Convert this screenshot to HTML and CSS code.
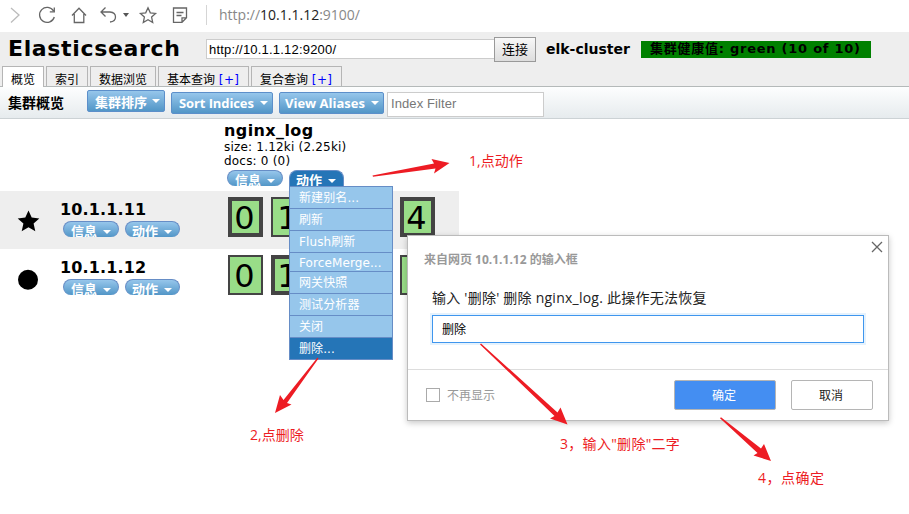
FILE: index.html
```html
<!DOCTYPE html>
<html lang="zh-CN">
<head>
<meta charset="utf-8">
<title>Elasticsearch</title>
<link rel="stylesheet" href="styles.css">
</head>
<body>
<div class="browser">
  <svg class="nav-icons" width="210" height="32" viewBox="0 0 210 32" fill="none" stroke="#666" stroke-width="1.3">
    <path d="M11 8l8 7-8 7.500" stroke="#bbb"/>
    <path d="M53.500 11a7.500 7.500 0 1 0 .8 6M54.300 7.500v4.300h-4.500"/>
    <path d="M72 15.500l7-7.300 7 7.300M74.300 14v8.500h9.500V14"/>
    <path d="M105.500 7.500L101 12l4.500 4.500M101.500 12h8.500q5.500 .5 5.500 5t-5.500 5"/>
    <path d="M123 13h6l-3 4z" fill="#555" stroke="none"/>
    <path d="M148 7.800l2.300 5 5.300.6-4 3.700 1.100 5.400-4.700-2.700-4.700 2.700 1.100-5.400-4-3.700 5.300-.6z"/>
    <path d="M182 22.300h-8.500V8h13v9.800zM182 22.300v-4.500h4.500M176.500 12.500h7M176.500 15.500h5"/>
    <path d="M206.500 5v20" stroke="#d5d5d5" stroke-width="1"/>
  </svg>
  <span class="address">http://<b>10.1.1.12</b>:9100/</span>
</div>
<header class="header">
  <div class="connect">
    <h1>Elasticsearch</h1>
    <input class="url" value="http://10.1.1.12:9200/">
    <button class="connect-btn">连接</button>
    <span class="cluster">elk-cluster</span>
    <span class="health">集群健康值: green (10 of 10)</span>
  </div>
  <nav class="tabs">
    <div class="tab tab-active t1">概览</div>
    <div class="tab t2">索引</div>
    <div class="tab t3">数据浏览</div>
    <div class="tab t4">基本查询 <span class="add">[+]</span></div>
    <div class="tab t5">复合查询 <span class="add">[+]</span></div>
  </nav>
</header>
<div class="toolbar">
  <strong class="tool-title">集群概览</strong>
  <div class="btn b1"><span>集群排序</span><i class="caret"></i></div>
  <div class="btn b2"><span>Sort Indices</span><i class="caret"></i></div>
  <div class="btn b3"><span>View Aliases</span><i class="caret"></i></div>
  <input class="filter" placeholder="Index Filter">
</div>
<main class="overview">
  <section class="index-head">
    <h2>nginx_log</h2>
    <div class="stat size">size: 1.12ki (2.25ki)</div>
    <div class="stat docs">docs: 0 (0)</div>
    <div class="pills">
      <div class="pill"><span>信息</span><i class="caret"></i></div>
      <div class="pill pill-open"><span>动作</span><i class="caret"></i></div>
      <div class="menu">
        <div>新建别名...</div>
        <div>刷新</div>
        <div>Flush刷新</div>
        <div class="short">ForceMerge...</div>
        <div>网关快照</div>
        <div>测试分析器</div>
        <div>关闭</div>
        <div class="selected">删除...</div>
      </div>
    </div>
  </section>
  <section class="node node-odd">
    <svg class="mark" width="24" height="24" viewBox="0 0 24 24"><path d="M12.500 1.500l3.200 7 7.600.9-5.700 5.200 1.700 7.700-6.800-4-6.800 4 1.700-7.700L1.700 9.400l7.600-.9z"/></svg>
    <div class="node-info"><h3>10.1.1.11</h3>
      <div class="pills"><div class="pill"><span>信息</span><i class="caret"></i></div><div class="pill p2"><span>动作</span><i class="caret"></i></div></div>
    </div>
    <div class="shards"><div class="shard primary">0</div><div class="shard">1</div><div class="shard primary">2</div><div class="shard">3</div><div class="shard primary">4</div></div>
  </section>
  <section class="node">
    <svg class="mark" width="24" height="24" viewBox="0 0 24 24"><circle cx="12" cy="12.700" r="10"/></svg>
    <div class="node-info"><h3>10.1.1.12</h3>
      <div class="pills"><div class="pill"><span>信息</span><i class="caret"></i></div><div class="pill p2"><span>动作</span><i class="caret"></i></div></div>
    </div>
    <div class="shards"><div class="shard">0</div><div class="shard primary">1</div><div class="shard">2</div><div class="shard primary">3</div><div class="shard">4</div></div>
  </section>
</main>
<div class="dialog">
  <div class="dialog-body">
    <svg class="close" width="12" height="12" viewBox="0 0 12 12" stroke="#666" stroke-width="1.300"><path d="M1 1l10 10M11 1L1 11"/></svg>
    <div class="dialog-title">来自网页 10.1.1.12 的输入框</div>
    <div class="dialog-msg">输入 '删除' 删除 nginx_log. 此操作无法恢复</div>
    <input class="dialog-input" value="删除">
  </div>
  <div class="dialog-foot">
    <span class="check"></span><span class="check-label">不再显示</span>
    <button class="ok">确定</button><button class="cancel">取消</button>
  </div>
</div>
<svg class="arrows" width="909" height="514" viewBox="0 0 909 514" fill="#ed1c24">
  <path d="M372.500 175.500L434 163.500 431.500 159 449.500 163 434 173.500 435.500 168.500 373 176.800z"/>
  <path d="M317.500 357.500L283.500 400 280 395 275 413 291.500 404.500 287 403 318.500 358.500z"/>
  <path d="M481 343.500L557.500 412.500 560.500 407.500 567.500 424.500 550 418.500 554.500 416 480 344.500z"/>
  <path d="M721 417.200L761 448.500 764 444 771 461 753.500 455.500 757.500 453 720 418.200z"/>
</svg>
<span class="note n1">1,点动作</span>
<span class="note n2">2,点删除</span>
<span class="note n3">3，输入"删除"二字</span>
<span class="note n4">4，点确定</span>
</body>
</html>
```
FILE: styles.css
```css
* { box-sizing: border-box; }
body { margin: 0; width: 909px; height: 514px; overflow: hidden; position: relative; background: #fff; color: #000; font-family: "DejaVu Sans", "Noto Sans CJK SC", sans-serif; font-size: 12px; }
h1, h2, h3 { margin: 0; }
input, button { font: inherit; margin: 0; border-radius: 0; outline: 0; }
span { white-space: nowrap; }
.browser { height: 32px; display: flex; align-items: center; }
.nav-icons { flex: none; }
.address { margin-left: 9px; font: 14px/20px "Open Sans", sans-serif; color: #888; padding-bottom: 2px; }
.address b { font-weight: 400; color: #222; }
.header { height: 55px; background: #eee; border-bottom: 1px solid #b4b9b9; display: flex; flex-direction: column; justify-content: space-between; }
.connect { height: 34px; display: flex; align-items: center; padding-left: 8px; }
h1 { font-size: 22px; line-height: 34px; width: 198px; letter-spacing: .65px; }
.url { width: 289px; height: 20px; border: 1px solid #ccc; padding: 0 2px; font: 13px "Liberation Sans", sans-serif; letter-spacing: .2px; }
.connect-btn { width: 42px; height: 25px; border: 1px solid #999; background: linear-gradient(#f8f8f8, #ddd); padding: 0; font: 13px/20px "Noto Sans CJK SC", sans-serif; margin-left: -1px; }
.cluster { font-weight: 700; font-size: 14px; margin-left: 10px; width: 95px; }
.health { background: #008000; font-weight: 700; font-size: 13px; line-height: 16px; height: 17px; width: 230px; padding-left: 9px; letter-spacing: .75px; }
.tabs { display: flex; height: 20px; padding-left: 2px; gap: 2px; }
.tab { border: 1px solid #b5b5b5; border-bottom: 0; height: 20px; padding: 3px 0 0 8px; line-height: 20px; white-space: nowrap; }
.tab-active { background: #fff; height: 21px; }
.t1 { width: 42px; } .t2 { width: 42px; } .t3 { width: 66px; } .t4 { width: 91px; } .t5 { width: 91px; }
.add { color: #00f; letter-spacing: .4px; }
.toolbar { height: 32px; border-bottom: 1px solid #ccd2d5; background: linear-gradient(#fdfefe, #e6ebee); display: flex; padding: 5px 0 0 8px; }
.tool-title { width: 79px; font-size: 14px; line-height: 22px; }
.btn { height: 22px; border: 1px solid #5c8fca; border-radius: 2px; background: linear-gradient(#96c6eb, #5296c7); color: #fff; font-weight: 700; display: flex; align-items: center; justify-content: space-between; padding: 0 4px 0 7px; white-space: nowrap; }
.b1 { width: 78px; margin-top: -2px; margin-right: 6px; font-size: 13px; }
.b2 { width: 102px; margin-right: 6px; font: 700 13px "Open Sans", sans-serif; letter-spacing: -.1px; }
.b3 { width: 105px; margin-right: 3px; font: 700 13px "Open Sans", sans-serif; padding-left: 5px; }
.caret { border: 4px solid transparent; border-top-color: #fff; border-bottom: 0; width: 8px; height: 4px; flex: none; }
.filter { width: 157px; height: 25px; border: 1px solid #ccc; padding: 0 3px 2px; font: 13px "Liberation Sans", sans-serif; letter-spacing: .1px; }
.filter::placeholder { color: #777; }
.index-head { height: 72px; margin-left: 224px; padding-top: 2px; }
h2 { font-size: 16px; line-height: 19px; height: 19px; letter-spacing: .4px; }
.stat { line-height: 14px; height: 14px; letter-spacing: .2px; }
.index-head .pills { margin: 2px 0 0 3px; gap: 6px; }
.pills { display: flex; position: relative; gap: 6px; }
.pill { width: 56px; height: 16px; border: 1px solid #668dc6; border-bottom: 0; border-radius: 8px; background: linear-gradient(#96c6eb, #5296c7); color: #fff; font-weight: 700; font-size: 13px; line-height: 20px; display: flex; justify-content: space-between; padding: 0 7px 0 7px; overflow: hidden; }
.p2 { width: 55px; padding-left: 6px; }
.pill .caret { margin-top: 8px; }
.pill-open { width: 55px; background: #2575b7; border-radius: 8px 8px 0 0; padding-left: 6px; }
.menu { position: absolute; left: 62px; top: 16px; width: 104px; border: 1px solid #668dc6; border-top-width: 1px; z-index: 2; }
.menu div { height: 22px; background: #96c6eb; color: #fff; padding: 1px 0 0 9px; line-height: 21px; border-bottom: 1px solid #668dc6; white-space: nowrap; letter-spacing: .1px; }
.menu .short { height: 19px; line-height: 18px; }
.menu .selected { height: 21px; background: #2575b7; border: 0; }
.node { width: 459px; height: 58px; display: flex; }
.node-odd { background: #eee; }
.mark { margin: 18px 0 0 16px; flex: none; }
.node-info { width: 168px; padding-left: 20px; flex: none; }
h3 { font-size: 16px; line-height: 19px; height: 30px; padding-top: 9px; letter-spacing: .15px; }
.node-info .pills { padding-left: 3px; }
.shards { display: flex; gap: 8px; padding: 6px 0 0 20px; }
.shard { width: 35px; height: 40px; border: 2px solid #444; background: #99dd88; font-size: 32px; line-height: 38px; display: flex; justify-content: center; padding-right: 2px; }
.shard.primary { border-width: 4px; line-height: 34px; }
.dialog { position: absolute; left: 407px; top: 235px; width: 482px; height: 186px; background: #fff; border: 1px solid #bbb; box-shadow: 0 2px 6px rgba(0,0,0,.22); z-index: 3; font-family: "Open Sans", "Noto Sans CJK SC", sans-serif; }
.dialog-body { height: 134px; border-bottom: 1px solid #ddd; padding: 15px 24px 0 16px; position: relative; }
.close { position: absolute; right: 5px; top: 5px; }
.dialog-title { font-weight: 700; color: #999; line-height: 18px; white-space: nowrap; }
.dialog-msg { font-size: 14px; line-height: 20px; margin: 19px 0 7px 8px; color: #222; white-space: nowrap; letter-spacing: .24px; }
.dialog-input { display: block; width: 432px; height: 28px; margin-left: 8px; border: 1px solid #3f96ee; box-shadow: 0 0 0 2px #e5f2fd; padding: 0 9px; }
.dialog-foot { height: 50px; display: flex; align-items: center; padding: 0 15px 0 18px; }
.check { width: 14px; height: 14px; border: 1px solid #aaa; }
.check-label { color: #999; margin-left: 7px; }
.ok, .cancel { height: 30px; border: 1px solid #b5b5b5; border-radius: 2px; background: #fff; padding: 0 2px 0 0; }
.ok { width: 102px; margin-left: auto; margin-right: 15px; background: #448ef2; color: #fff; }
.cancel { width: 82px; color: #222; }
.arrows { position: absolute; left: 0; top: 0; z-index: 4; }
.note { position: absolute; z-index: 5; color: #ed1c24; font: 14px/20px "Open Sans", "Noto Sans CJK SC", sans-serif; }
.n1 { left: 469px; top: 151px; }
.n2 { left: 250px; top: 425px; }
.n3 { left: 560px; top: 434px; letter-spacing: .3px; }
.n4 { left: 758px; top: 468px; letter-spacing: .5px; }
```
